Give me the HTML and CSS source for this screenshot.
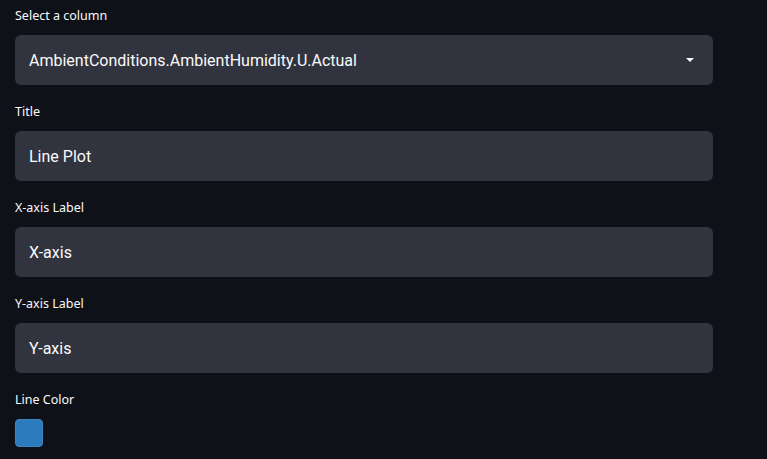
FILE: index.html
```html
<!DOCTYPE html>
<html>
<head>
<meta charset="utf-8">
<link rel="stylesheet" href="styles.css">
</head>
<body>
<div class="form">
  <div class="field">
    <label class="label">Select a column</label>
    <div class="input select">
      <span>AmbientConditions.AmbientHumidity.U.Actual</span>
      <svg class="caret" width="10" height="6" viewBox="0 0 10 6"><path d="M1 1h8L5 5z" fill="#fafafa"/></svg>
    </div>
  </div>
  <div class="field">
    <label class="label">Title</label>
    <div class="input"><span>Line Plot</span></div>
  </div>
  <div class="field">
    <label class="label">X-axis Label</label>
    <div class="input"><span>X-axis</span></div>
  </div>
  <div class="field">
    <label class="label">Y-axis Label</label>
    <div class="input"><span>Y-axis</span></div>
  </div>
  <div class="field">
    <label class="label">Line Color</label>
    <div class="swatch"></div>
  </div>
</div>
</body>
</html>
```
FILE: styles.css
```css
html, body {
  margin: 0;
  padding: 0;
  background: #0e1117;
  height: 100%;
  overflow: hidden;
}
body {
  font-family: "Noto Sans", "Open Sans", sans-serif;
  color: #fafafa;
}
.form {
  padding-left: 15px;
  width: 698px;
}
.field {
  margin-bottom: 11px;
}
.label {
  display: block;
  font-size: 12.5px;
  line-height: 16px;
  padding-top: 8px;
  margin-bottom: 11px;
  color: #fafafa;
}
.input {
  height: 50px;
  box-sizing: border-box;
  background: #31333f;
  border-radius: 6px;
  padding: 0 14px;
  display: flex;
  align-items: center;
  font-family: Roboto, "Noto Sans", sans-serif;
  font-size: 16px;
  color: #fafafa;
}
.select {
  justify-content: space-between;
  padding-right: 18px;
}
.caret {
  display: block;
}
.swatch {
  width: 28px;
  height: 28px;
  box-sizing: border-box;
  border-radius: 4px;
  background: #2c7bbd;
  border: 1px solid #3a86c4;
}
```
